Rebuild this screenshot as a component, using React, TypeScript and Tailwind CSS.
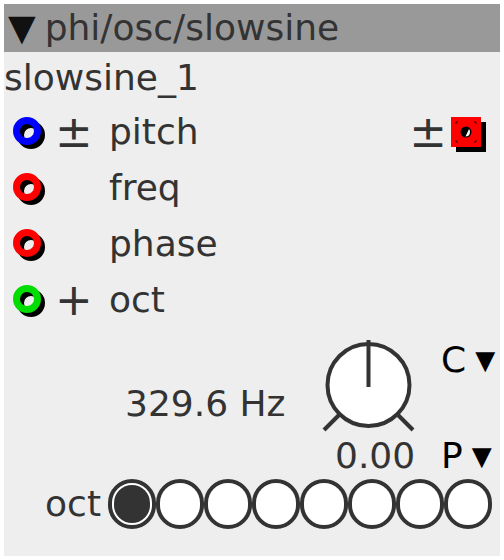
import React from "react";

type Port = { color: string; sign: string; label: string; right?: boolean };

const ports: Port[] = [
  { color: "#0000ff", sign: "±", label: "pitch", right: true },
  { color: "#ff0000", sign: "", label: "freq" },
  { color: "#ff0000", sign: "", label: "phase" },
  { color: "#00dd00", sign: "+", label: "oct" },
];

function PortRing({ color }: { color: string }) {
  return (
    <div className="relative w-[33px] h-[33px]">
      <div className="absolute left-[4px] top-[4px] w-[28px] h-[28px] rounded-full border-[7px] border-black" />
      <div
        className="absolute left-0 top-0 w-[28px] h-[28px] rounded-full border-[7px]"
        style={{ borderColor: color }}
      />
    </div>
  );
}

function OutJack() {
  return (
    <svg width="36" height="36" viewBox="0 0 36 36" className="shrink-0">
      <rect x="5" y="5" width="30" height="30" fill="#000" />
      <rect x="0" y="0" width="30" height="30" fill="#ff0000" />
      <path d="M5 7V5h2M23 5h2v2M25 23v2h-2M7 25H5v-2" stroke="#400" strokeWidth="1" fill="none" />
      <circle cx="15" cy="15" r="5.5" fill="#000" />
      <path d="M18 12a4.5 4.5 0 0 1 -3.5 7.5z" fill="#fff" />
    </svg>
  );
}

function Knob() {
  return (
    <svg width="100" height="100" viewBox="0 0 100 100">
      <circle cx="48.5" cy="49" r="41" fill="#fff" stroke="#333" strokeWidth="4" />
      <line x1="48.5" y1="4" x2="48.5" y2="51" stroke="#333" strokeWidth="4" />
      <line x1="4" y1="94" x2="20" y2="78" stroke="#333" strokeWidth="4" />
      <line x1="77" y1="78" x2="93" y2="94" stroke="#333" strokeWidth="4" />
    </svg>
  );
}

export default function App() {
  const octaves = [0, 1, 2, 3, 4, 5, 6, 7];
  return (
    <div className="bg-white p-1 min-h-[560px] font-['DejaVu_Sans',sans-serif] text-[36px] leading-[40px] text-[#333]">
      <div className="w-[496px] h-[552px] bg-[#eeeeee] flex flex-col">
        <div className="h-[48px] bg-[#999999] flex items-center pl-[4px]">
          <span className="text-[#111]">▼</span>
          <span className="ml-[9px]">phi/osc/slowsine</span>
        </div>
        <div className="h-[52px] flex items-center">slowsine_1</div>

        {ports.map((p) => (
          <div key={p.label} className="h-[56px] flex items-center">
            <div className="w-[51px] pl-[9px] pt-[3px]">
              <PortRing color={p.color} />
            </div>
            <div className="w-[54px] text-[45px] leading-[40px]">{p.sign}</div>
            <div>{p.label}</div>
            {p.right && (
              <div className="ml-auto mr-[13px] flex items-center gap-[4px]">
                <span className="text-[45px] leading-[40px]">±</span>
                <div className="mt-[6px]">
                  <OutJack />
                </div>
              </div>
            )}
          </div>
        ))}

        <div className="flex">
          <div className="w-[316px] pl-[121px] pt-[56px]">329.6 Hz</div>
          <div className="w-[100px] pt-[8px] flex flex-col">
            <Knob />
            <div className="pl-[15px]">0.00</div>
          </div>
          <div className="ml-[21px] pt-[12px] flex flex-col gap-[56px] text-black">
            <div className="flex items-center">
              <span>C</span>
              <span className="ml-[9px] text-[26px]">▼</span>
            </div>
            <div className="flex items-center">
              <span>P</span>
              <span className="ml-[9px] text-[26px]">▼</span>
            </div>
          </div>
        </div>

        <div className="flex items-center mt-[3px]">
          <div className="w-[104px] text-right pr-[7px]">oct</div>
          <div className="flex">
            {octaves.map((o) => (
              <div
                key={o}
                className="w-[48px] h-[50px] rounded-full border-4 border-[#333] bg-white flex items-center justify-center"
              >
                {o === 0 && <div className="w-[36px] h-[38px] rounded-full bg-[#333]" />}
              </div>
            ))}
          </div>
        </div>
      </div>
    </div>
  );
}
